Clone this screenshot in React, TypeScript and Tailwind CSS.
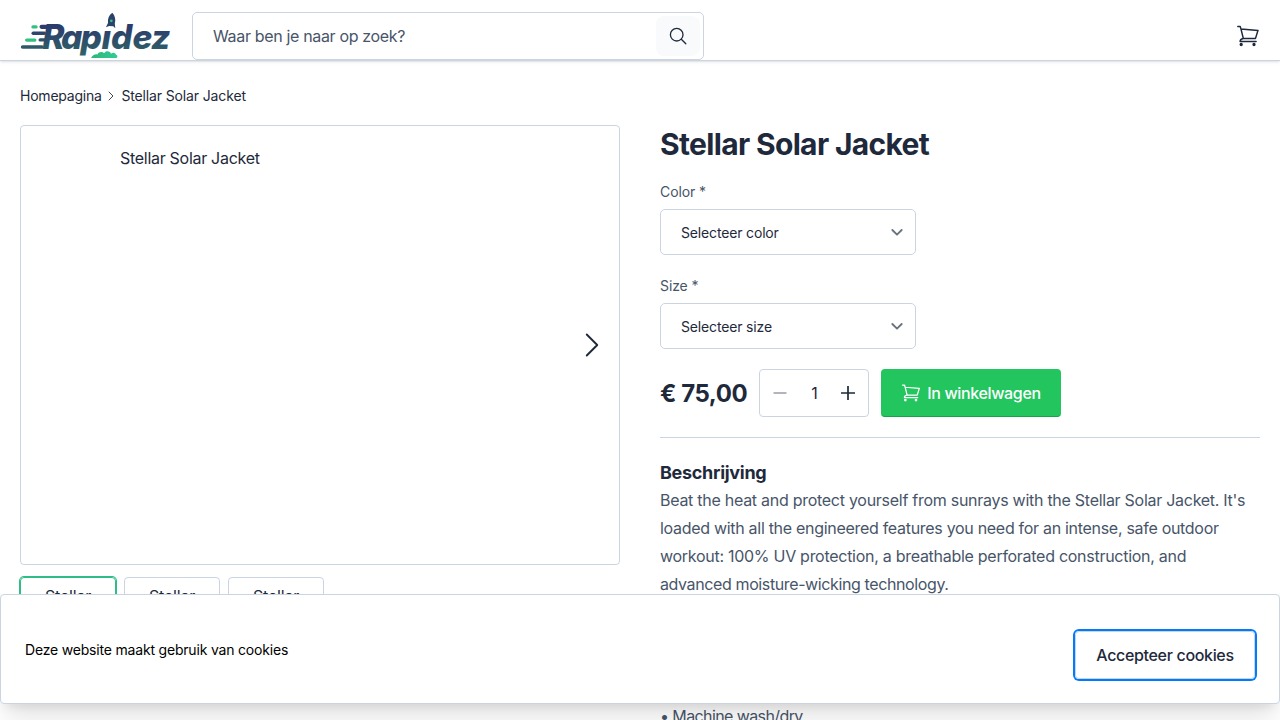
import type { ReactNode } from 'react'

function Logo() {
  return (
    <svg width="152" height="46" viewBox="0 0 152 46" className="shrink-0" role="img" aria-label="Rapidez">
      <defs>
        <linearGradient id="ink" gradientUnits="userSpaceOnUse" x1="0" y1="0" x2="0" y2="46">
          <stop offset="0.3" stopColor="#2c3b6b" />
          <stop offset="0.95" stopColor="#2f6468" />
        </linearGradient>
        <linearGradient id="leaf" x1="0" y1="0" x2="1" y2="0">
          <stop offset="0" stopColor="#2fb777" />
          <stop offset="1" stopColor="#32cb98" />
        </linearGradient>
      </defs>
      <g fill="url(#ink)">
        <rect x="19.500" y="12.700" width="18" height="4.200" rx="2.100" />
        <rect x="11.500" y="19.500" width="14.500" height="3.400" rx="1.700" />
        <rect x="18.500" y="26.200" width="10" height="3.400" rx="1.700" />
        <rect x="0.800" y="33.200" width="23" height="3.500" rx="1.750" />
      </g>
      <g fill="#30c17f">
        <rect x="11.300" y="13.200" width="6.400" height="3.400" rx="1.700" />
        <rect x="5" y="26.400" width="11.500" height="3.400" rx="1.700" />
      </g>
      <text x="22.300 41 60.500 81.500 91 112.500 131" y="36.700" fill="url(#ink)" className="font-['Inter',sans-serif] text-[33.5px] font-extrabold italic">
        Rapidez
      </text>
      <path d="M82.500 8H95.500L94.500 17.300H82.500z" fill="#fff" />
      <path d="M92.300 .8C88.800 3.300 87.500 7 88 11L85.900 15.300 89.200 14 93.300 14.300 95.300 16.200 94.800 11.600C96 7.500 95 3.500 92.300 .8Z" fill="#2c426c" />
      <circle cx="91.300" cy="8.800" r="1.400" fill="#30c17f" />
      <path d="M71 46C72.500 43.300 75 41.600 77.500 42.400 78.500 39.800 82.500 39.300 84 41.300 86 38 90.500 39 91 41.800 93 40 95.500 40.800 96 42.800 98 43 97.500 46 96.500 46Z" fill="url(#leaf)" />
    </svg>
  )
}

function Cart({ className }: { className: string }) {
  return (
    <svg viewBox="0 0 24 24" className={className} fill="none" stroke="currentColor" strokeWidth="1.5" strokeLinecap="round" strokeLinejoin="round">
      <path d="M1.800 2.400h2.400l.8 2.700 2.300 9.300h12.200l2.500-8L5 5.100M7.300 14.400c-2 .4-3.200 1.400-3.200 3.100h16" />
      <circle cx="5.200" cy="20.500" r=".9" fill="currentColor" />
      <circle cx="18" cy="20.500" r=".9" fill="currentColor" />
    </svg>
  )
}

function Chevron({ className, d, width }: { className: string; d: string; width: string }) {
  return (
    <svg viewBox="0 0 24 24" className={className} fill="none" stroke="currentColor" strokeWidth={width} strokeLinecap="round" strokeLinejoin="round">
      <path d={d} />
    </svg>
  )
}

function Option({ label, value }: { label: string; value: string }) {
  return (
    <div className="w-64">
      <div className="text-sm tracking-[-0.1px] text-[#475569]">{label}</div>
      <button className="mt-[7px] flex h-[46px] w-full items-center justify-between rounded-[5px] border border-[#cbd5e1] pr-[10.5px] pl-5 text-sm tracking-[-0.16px]">
        <span className="pt-0.5">{value}</span>
        <Chevron className="size-4 text-[#6b7280]" d="M5 9l7 7 7-7" width="2.800" />
      </button>
    </div>
  )
}

function Thumb({ active, children }: { active?: boolean; children: ReactNode }) {
  return (
    <div
      className={
        active
          ? 'h-24 w-24 rounded border border-[#2fbc85] px-6 pt-1.5 leading-6 tracking-[-0.2px] ring-1 ring-[#2fbc85]'
          : 'h-24 w-24 rounded border border-[#cbd5e1] px-6 pt-1.5 leading-6 tracking-[-0.2px]'
      }
    >
      {children}
    </div>
  )
}

export default function App() {
  return (
    <div className="relative h-[720px] w-[1280px] overflow-hidden bg-white font-['Inter',sans-serif] text-base text-[#1e293b]">
      <header className="flex h-[61px] items-start border-b border-[#cbd5e1] px-5 pt-3 shadow-sm">
        <Logo />
        <div className="ml-5 flex h-12 w-[512px] items-center justify-between rounded-[5px] border border-[#cbd5e1] pr-[3px] pl-5">
          <span className="tracking-[-0.34px] text-[#475569]">Waar ben je naar op zoek?</span>
          <button className="flex h-10 w-11 items-center justify-center rounded-lg bg-[#f8fafc]">
            <svg viewBox="0 0 18 18" className="size-[18px]" fill="none" stroke="currentColor" strokeWidth="1.300" strokeLinecap="round">
              <circle cx="7.700" cy="7.700" r="6.300" />
              <path d="M12.300 12.300l4.500 4.500" />
            </svg>
          </button>
        </div>
        <Cart className="mt-3 ml-auto size-6" />
      </header>

      <nav className="mt-[25px] flex h-5 items-center px-5 text-sm tracking-[-0.14px]">
        <span className="tracking-[-0.22px]">Homepagina</span>
        <Chevron className="mr-1 ml-[3.700px] size-3" d="M8 4l8 8-8 8" width="1.700" />
        <span>Stellar Solar Jacket</span>
      </nav>

      <main className="mt-[19px] grid grid-cols-2 gap-10 px-5">
        <section>
          <div className="flex h-[440px] justify-between rounded border border-[#cbd5e1] pr-[13px]">
            <span className="pt-5 pl-[99px] leading-6 tracking-[-0.29px]">Stellar Solar Jacket</span>
            <Chevron className="size-7 self-center" d="M7.500 3l9 9-9 9" width="1.600" />
          </div>
          <div className="mt-3 flex gap-2">
            <Thumb active>Stellar</Thumb>
            <Thumb>Stellar</Thumb>
            <Thumb>Stellar</Thumb>
          </div>
        </section>

        <section>
          <h1 className="mt-px text-3xl font-bold tracking-[-0.66px]">Stellar Solar Jacket</h1>
          <div className="mt-5 flex flex-col gap-[21px]">
            <Option label="Color *" value="Selecteer color" />
            <Option label="Size *" value="Selecteer size" />
          </div>
          <div className="mt-5 flex h-12 items-center gap-3">
            <span className="w-[87px] pt-0.5 text-2xl font-bold tracking-[-0.45px] whitespace-nowrap">€ 75,00</span>
            <div className="flex h-12 w-[110px] items-center justify-between rounded border border-[#cbd5e1] px-3">
              <svg viewBox="0 0 16 16" className="size-4 text-[#a5a9b0]" stroke="currentColor" strokeWidth="1.700">
                <path d="M1.500 8h13" />
              </svg>
              <span className="pl-px">1</span>
              <svg viewBox="0 0 16 16" className="size-4" stroke="currentColor" strokeWidth="1.700">
                <path d="M1 8h14M8 1v14" />
              </svg>
            </div>
            <button className="flex h-12 w-[180px] items-center justify-center gap-1.5 rounded border-b border-[#16a34a] bg-[#22c55e] font-medium tracking-[-0.36px] text-white">
              <Cart className="size-5" />
              In winkelwagen
            </button>
          </div>
          <div className="mt-5 border-t border-[#cbd5e1] pt-[21px]">
            <h2 className="text-lg font-bold tracking-[-0.3px]">Beschrijving</h2>
            <p className="-mt-px leading-7 whitespace-nowrap text-[#475569]">
              <span className="tracking-[-0.273px]">Beat the heat and protect yourself from sunrays with the Stellar Solar Jacket. It's</span>
              <br />
              <span className="tracking-[-0.298px]">loaded with all the engineered features you need for an intense, safe outdoor</span>
              <br />
              <span className="tracking-[-0.278px]">workout: 100% UV protection, a breathable perforated construction, and</span>
              <br />
              <span className="tracking-[-0.385px]">advanced moisture-wicking technology.</span>
            </p>
            <p className="mt-[104px] leading-7 tracking-[-0.6px] text-[#475569]">• Machine wash/dry</p>
          </div>
        </section>
      </main>

      <aside className="absolute top-[594px] left-0 flex h-[110px] w-full items-center justify-between rounded border border-[#cbd5e1] bg-white pr-6 pl-6 shadow-xl">
        <p className="pt-0.5 text-sm tracking-[-0.19px] text-black">Deze website maakt gebruik van cookies</p>
        <button className="mt-3 h-12 w-[180px] rounded border border-[#cbd5e1] font-medium tracking-[-0.33px] ring-2 ring-[#007bff]">
          Accepteer cookies
        </button>
      </aside>
    </div>
  )
}
